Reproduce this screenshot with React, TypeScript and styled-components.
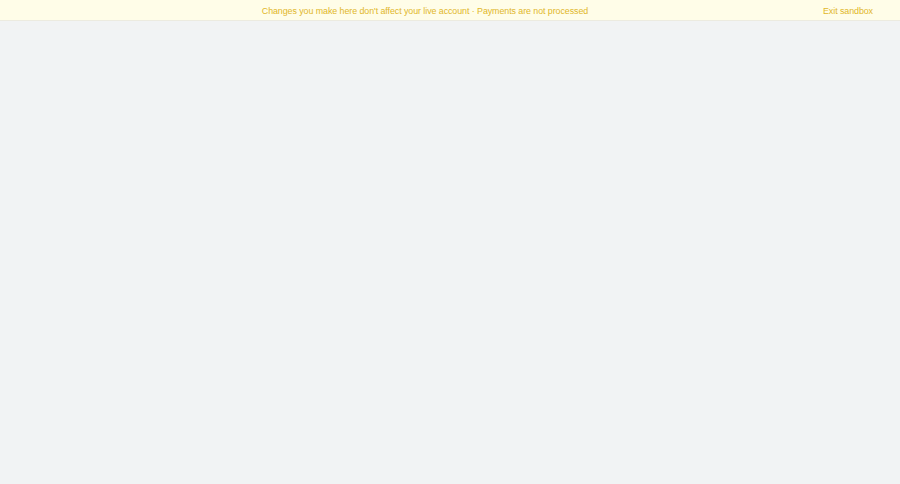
import React from "react";
import styled, { createGlobalStyle } from "styled-components";

const Global = createGlobalStyle`
  html, body { margin: 0; padding: 0; background: #f1f3f4; }
  body { font-family: "Liberation Sans", Arial, sans-serif; }
  #root { min-height: 100vh; }
`;

const Page = styled.div`
  min-height: 100vh;
  background: #f1f3f4;
  display: flex;
  flex-direction: column;
`;

const Banner = styled.div`
  box-sizing: border-box;
  height: 21px;
  display: flex;
  align-items: center;
  padding: 1px 27px 0;
  background: #fffde8;
  border-bottom: 1px solid #ecebe0;
  font-size: 8.9px;
  letter-spacing: -0.07px;
  color: #dfb72a;
`;

const Message = styled.div`
  flex: 1;
  text-align: center;
  white-space: nowrap;
`;

const ExitLink = styled.a`
  color: #dfb72a;
  text-decoration: none;
  cursor: pointer;
  white-space: nowrap;
`;

export default function App() {
  return (
    <Page>
      <Global />
      <Banner>
        <Message>
          Changes you make here don't affect your live account · Payments are not processed
        </Message>
        <ExitLink>Exit sandbox</ExitLink>
      </Banner>
    </Page>
  );
}
